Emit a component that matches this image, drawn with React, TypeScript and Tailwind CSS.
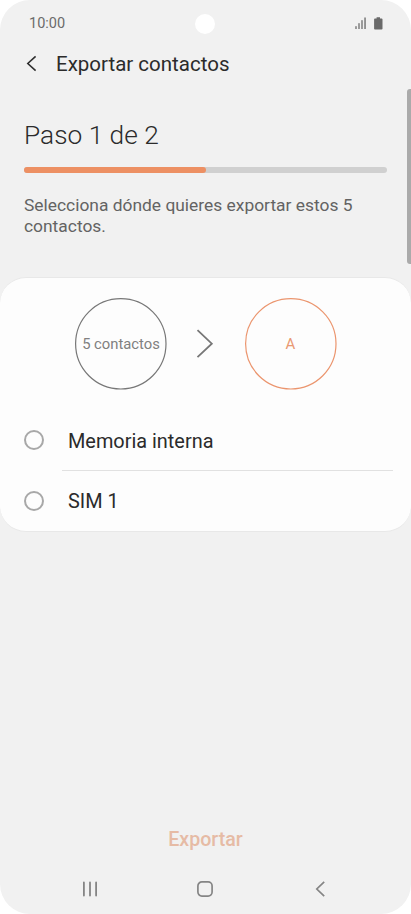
import { useState } from 'react';

const options = [
  { id: 'internal', label: 'Memoria interna' },
  { id: 'sim1', label: 'SIM 1' },
];

function StatusBar() {
  return (
    <header className="relative flex h-[46px] items-center justify-between pl-[29px] pr-[28px]">
      <span className="pt-[2px] text-[14.5px] leading-[18px] text-[#6b6b6b]">10:00</span>

      {/* Camera cutout */}
      <div className="absolute left-[194.5px] top-[13.5px] size-[20.5px] rounded-full bg-white" />

      <div className="flex items-center gap-[7px]">
        <svg width="12" height="12" viewBox="0 0 12 12" fill="#858585">
          <rect x="0.2" y="9.2" width="1.6" height="2.8" />
          <rect x="3.2" y="6.2" width="1.6" height="5.8" />
          <rect x="6.2" y="3.2" width="1.6" height="8.8" />
          <rect x="9.2" y="0.5" width="1.7" height="11.5" />
        </svg>
        <svg width="9" height="13" viewBox="0 0 9 13" fill="#6a6a6a">
          <path d="M2.6 0.2h3.4v1.3h1.6q0.9 0 0.9 0.9v9.4q0 0.8-0.9 0.8h-6.6q-0.9 0-0.9-0.8v-9.4q0-0.9 0.9-0.9h1.6z" />
        </svg>
      </div>
    </header>
  );
}

// Thin ring behind the source / target labels
function Ring() {
  return (
    <svg className="absolute inset-0" width="92" height="92" viewBox="0 0 92 92" fill="none" stroke="currentColor" strokeWidth="1.2">
      <circle cx="45.8" cy="45.8" r="45.2" />
    </svg>
  );
}

function NavigationBar() {
  return (
    <nav className="flex h-[50px] items-center justify-between pl-[79px] pr-[80px]">
      <button aria-label="Recientes" className="flex w-[22px] justify-center">
        <svg width="16" height="16" viewBox="0 0 16 16" stroke="#858585" strokeWidth="1.8" strokeLinecap="round">
          <path d="M1.9 1.4v13.2M8 1.4v13.2M14.1 1.4v13.2" />
        </svg>
      </button>
      <button aria-label="Inicio" className="flex w-[22px] justify-center">
        <svg width="18" height="18" viewBox="0 0 18 18" fill="none" stroke="#858585" strokeWidth="1.7">
          <rect x="1.9" y="1.9" width="14.2" height="14.2" rx="4" />
        </svg>
      </button>
      <button aria-label="Volver" className="flex w-[22px] justify-center">
        <svg width="12" height="18" viewBox="0 0 12 18" fill="none" stroke="#858585" strokeWidth="1.7">
          <path d="M10.2 1.9L2.8 9l7.4 7.1" />
        </svg>
      </button>
    </nav>
  );
}

export default function App() {
  const [selected, setSelected] = useState<string | null>(null);

  return (
    <div className="h-[914px] w-[411px] bg-white font-[Roboto,sans-serif]">
      <div className="relative flex h-full flex-col overflow-hidden rounded-[30px] bg-[#f1f1f1]">
        <StatusBar />

        {/* Title bar */}
        <div className="flex h-[36px] items-center pl-[25px]">
          <button aria-label="Atrás">
            <svg width="13" height="18" viewBox="0 0 13 18" fill="none" stroke="#303030" strokeWidth="1.6">
              <path d="M10.6 1.3L2.8 8.5l7.8 7.2" />
            </svg>
          </button>
          <h1 className="ml-[18px] text-[20.5px] leading-6 text-[#2b2b2b]">Exportar contactos</h1>
        </div>

        {/* Step and progress */}
        <section className="h-[195px] px-6 pt-[37px]">
          <h2 className="text-[26.3px] font-light leading-8 text-[#2b2b2b]">Paso 1 de 2</h2>
          <div className="mt-[16px] h-[6px] rounded-full bg-[#d0d0d0]">
            <div className="h-full w-1/2 rounded-full bg-[#ed9063]" />
          </div>
          <p className="mt-[22px] text-[17.4px] leading-[21px] text-[#636363]">
            Selecciona dónde quieres exportar estos 5 contactos.
          </p>
        </section>

        <main className="h-[255px] rounded-[26px] border-y border-[#e8e8e8] bg-[#fdfdfd]">
          <div className="flex items-center pl-[75px] pt-[20px]">
            <div className="relative flex size-[92px] items-center justify-center text-[#777777]">
              <Ring />
              <span className="whitespace-nowrap pt-px text-[14.8px] text-[#808080]">5 contactos</span>
            </div>
            <svg className="ml-[28px]" width="20" height="30" viewBox="0 0 20 30" fill="none" stroke="#777777" strokeWidth="1.8">
              <path d="M2.5 1.2L16.8 14.7L2.5 28.2" />
            </svg>
            <div className="relative ml-[29.5px] flex size-[92px] items-center justify-center text-[#eb956e]">
              <Ring />
              <span className="pt-px text-[15px] text-[#e99972]">A</span>
            </div>
          </div>

          <div className="pt-[20px]">
            {options.map((option, i) => (
              <button
                key={option.id}
                onClick={() => setSelected(option.id)}
                className="flex h-[61px] w-full items-center pl-6 text-left"
              >
                <span className="-mt-px flex size-5 items-center justify-center rounded-full border-2 border-[#a8a8a8]">
                  {selected === option.id && <span className="size-2.5 rounded-full bg-[#ed9063]" />}
                </span>
                <span
                  className={
                    i === 0
                      ? 'ml-[18px] flex h-full w-[331px] items-center border-b border-[#e1e1e1] pl-[6px] pt-[2px]'
                      : 'ml-[18px] flex h-full w-[331px] items-center pl-[6px]'
                  }
                >
                  <span className="pt-px text-[19.9px] leading-6 text-[#2b2b2b]">{option.label}</span>
                </span>
              </button>
            ))}
          </div>
        </main>

        <div className="mt-auto flex h-[50px] items-center justify-center pt-px">
          <button className="text-[19.6px] font-medium leading-6 text-[#e6bba5]">Exportar</button>
        </div>
        <NavigationBar />

        {/* Scrollbar thumb */}
        <div className="absolute right-0 top-[89px] h-[175px] w-[4px] rounded-l-[3px] bg-[#aaaaaa]" />
      </div>
    </div>
  );
}
